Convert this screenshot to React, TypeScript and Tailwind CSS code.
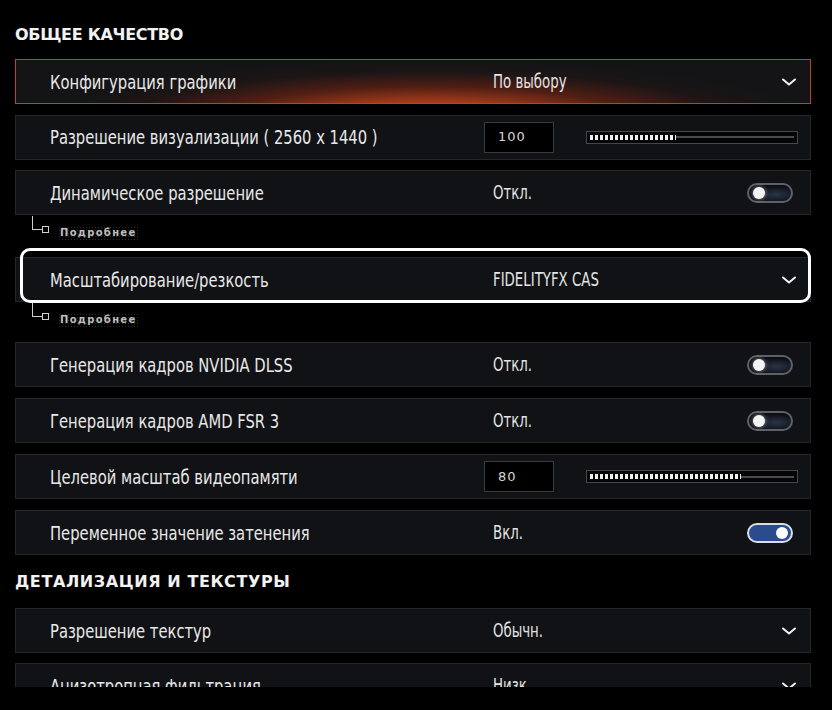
import React from 'react';

const labelFont = { fontFamily: '"DejaVu Sans Condensed", "Liberation Sans Narrow", "DejaVu Sans", sans-serif' };

function Chevron() {
  return (
    <svg width="16" height="10" viewBox="0 0 16 10" className="mr-[13px]">
      <path d="M2 2.5 L8 7.5 L14 2.5" fill="none" stroke="#f2f2f2" strokeWidth="2" strokeLinecap="round" strokeLinejoin="round" />
    </svg>
  );
}

function Toggle({ on }: { on?: boolean }) {
  if (on) {
    return (
      <div className="mr-[17px] flex h-[20px] w-[46px] items-center justify-end rounded-full border-2 border-[#d7deea] bg-[#2b4c8c] pr-[3px]">
        <div className="h-[12px] w-[12px] rounded-full bg-white" />
      </div>
    );
  }
  return (
    <div className="mr-[17px] flex h-[20px] w-[46px] items-center rounded-full border-2 border-[#5d6067] bg-[radial-gradient(ellipse_at_65%_60%,#2a3447_0%,#0b0d12_65%)] pl-[4px]">
      <div className="h-[12px] w-[12px] rounded-full bg-[#f4f4f4] shadow-[0_0_4px_rgba(255,255,255,0.6)]" />
    </div>
  );
}

function Slider({ value, pct }: { value: string; pct: number }) {
  return (
    <div className="flex flex-1 items-center">
      <div
        className="ml-[-9px] flex h-[31px] w-[70px] items-center border border-[#3a3b3f] bg-black pl-[13px] text-[13px] tracking-[1px] text-[#d6d6d6]"
        style={{ fontFamily: '"DejaVu Sans", sans-serif' }}
      >
        {value}
      </div>
      <div className="ml-[32px] mr-[12px] flex h-[13px] flex-1 items-center border border-[#46474c] bg-[#050505] px-[3px]">
        <div
          className="h-[5px] bg-[repeating-linear-gradient(90deg,#f0f0f0_0px,#f0f0f0_3px,transparent_3px,transparent_5px)]"
          style={{ width: `${pct}%` }}
        />
        <div className="h-[2px] flex-1 bg-[#4a4b50]" />
      </div>
    </div>
  );
}

function Row({
  label,
  value,
  kind,
  on,
  pct,
  accent,
}: {
  label: string;
  value: string;
  kind: 'select' | 'toggle' | 'slider';
  on?: boolean;
  pct?: number;
  accent?: boolean;
}) {
  const base = accent
    ? 'border-[#b8452a] bg-[radial-gradient(ellipse_58%_170%_at_52%_140%,#e0561f_0%,#a73d1a_24%,#4f1e13_46%,#1c1516_66%,#141416_82%)]'
    : 'border-[#26272b] bg-[#111215]';
  return (
    <div className={`flex h-[45px] items-center border ${base}`} style={labelFont}>
      <div className="w-[477px] shrink-0 pl-[34px]">
        <span className="inline-block origin-left scale-x-[0.82] whitespace-nowrap text-[20px] text-[#e8e8e8]">{label}</span>
      </div>
      {kind === 'slider' ? (
        <Slider value={value} pct={pct ?? 0} />
      ) : (
        <>
          <div className="flex-1">
            <span className="inline-block origin-left scale-x-[0.78] whitespace-nowrap text-[19px] text-[#e4e4e4]">{value}</span>
          </div>
          {kind === 'select' ? <Chevron /> : <Toggle on={on} />}
        </>
      )}
    </div>
  );
}

function More({ h }: { h: string }) {
  return (
    <div className={`relative ${h}`}>
      <div className="absolute left-[17px] top-[1px] h-[14px] w-[10px] border-b border-l border-[#cfcfcf]" />
      <div className="absolute left-[27px] top-[11px] h-[7px] w-[7px] border border-[#cfcfcf]" />
      <div
        className="absolute left-[43px] top-[11px] bg-[radial-gradient(#2c2c2c_1px,transparent_1px)] bg-[length:3px_3px] px-[2px] text-[10px] font-bold leading-[14px] tracking-[1.3px] text-[#bdbdbd]"
        style={{ fontFamily: '"DejaVu Sans", sans-serif' }}
      >
        Подробнее
      </div>
    </div>
  );
}

function Header({ children, wide }: { children: React.ReactNode; wide?: boolean }) {
  return (
    <div
      className={`h-[24px] text-[16px] font-bold leading-[24px] text-[#f2f2f2] ${wide ? 'tracking-[0.6px]' : 'tracking-[-0.3px]'}`}
      style={{ fontFamily: '"DejaVu Sans", sans-serif' }}
    >
      {children}
    </div>
  );
}

export default function App() {
  return (
    <div className="relative h-[710px] w-[832px] overflow-hidden bg-black">
      <div className="pl-[15px] pr-[21px] pt-[23px]">
        <Header>ОБЩЕЕ КАЧЕСТВО</Header>
        <div className="mt-[12px] flex flex-col gap-[10.5px]">
          <Row label="Конфигурация графики" value="По выбору" kind="select" accent />
          <Row label="Разрешение визуализации ( 2560 x 1440 )" value="100" kind="slider" pct={42} />
          <Row label="Динамическое разрешение" value="Откл." kind="toggle" />
        </div>
        <More h="h-[42px]" />
        <div className="relative">
          <div className="pointer-events-none absolute bottom-[-1px] left-[5px] right-0 top-[-9px] rounded-[10px] border-[3px] border-white" />
          <Row label="Масштабирование/резкость" value="FIDELITYFX CAS" kind="select" />
        </div>
        <More h="h-[40px]" />
        <div className="flex flex-col gap-[11px]">
          <Row label="Генерация кадров NVIDIA DLSS" value="Откл." kind="toggle" />
          <Row label="Генерация кадров AMD FSR 3" value="Откл." kind="toggle" />
          <Row label="Целевой масштаб видеопамяти" value="80" kind="slider" pct={74} />
          <Row label="Переменное значение затенения" value="Вкл." kind="toggle" on />
        </div>
        <div className="mt-[15px]">
          <Header wide>ДЕТАЛИЗАЦИЯ И ТЕКСТУРЫ</Header>
        </div>
        <div className="mt-[14px] flex flex-col gap-[10px]">
          <Row label="Разрешение текстур" value="Обычн." kind="select" />
          <Row label="Анизотропная фильтрация" value="Низк." kind="select" />
        </div>
      </div>
      <div className="absolute bottom-0 left-0 right-0 h-[23px] bg-black" />
    </div>
  );
}
